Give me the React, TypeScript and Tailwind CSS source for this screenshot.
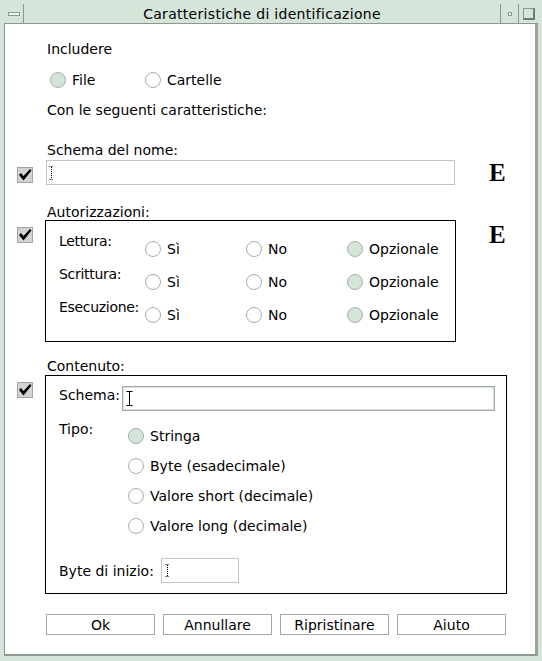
import React from 'react';

const Radio: React.FC<{ checked?: boolean; label: string }> = ({ checked, label }) => (
  <div className="flex items-center gap-[6px] h-4">
    <span
      className={`w-4 h-4 rounded-full border border-[#a9aea9] shrink-0 ${
        checked ? 'bg-[#d4e5d8]' : 'bg-white'
      }`}
    />
    <span className="leading-4 whitespace-nowrap">{label}</span>
  </div>
);

const Check: React.FC = () => (
  <span className="w-4 h-4 bg-[#d3d3d3] border border-[#a4a4a4] flex items-center justify-center shrink-0">
    <svg width="14" height="14" viewBox="0 0 14 14">
      <path d="M1 7 L3 5 L5.5 8 L12 1 L13.5 2.5 L5.5 12.5 Z" fill="#000" />
    </svg>
  </span>
);

const DotCursor: React.FC<{ h?: number }> = ({ h = 14 }) => (
  <svg width="5" height={h} viewBox={`0 0 5 ${h}`}>
    <line x1="2.5" y1="1" x2="2.5" y2={h - 1} stroke="#000" strokeDasharray="1 1" />
    <line x1="0.5" y1="0.5" x2="4.5" y2="0.5" stroke="#000" strokeDasharray="1 1" />
    <line x1="0.5" y1={h - 0.5} x2="4.5" y2={h - 0.5} stroke="#000" strokeDasharray="1 1" />
  </svg>
);

const Row3: React.FC<{ label: string }> = ({ label }) => (
  <div className="flex items-start h-[33px]">
    <span className="w-[86px] leading-4 whitespace-nowrap tracking-[-0.3px]">{label}</span>
    <div className="flex mt-[8px]">
      <div className="w-[101px]"><Radio label="Sì" /></div>
      <div className="w-[101px]"><Radio label="No" /></div>
      <div><Radio checked label="Opzionale" /></div>
    </div>
  </div>
);

export default function App() {
  return (
    <div className="w-[542px] h-[661px] bg-[#d6e5d9] pt-[4px] pl-[4px] pr-[4px] pb-[5px] flex flex-col font-['DejaVu_Sans',sans-serif] text-[14px] text-black">
      {/* title bar */}
      <div className="h-[20px] flex border-b border-[#8d988f] shrink-0">
        <div className="w-[20px] border-r border-[#8d988f] flex items-center justify-center">
          <span className="w-[12px] h-[4px] border border-[#8d988f] bg-[#eef5ef]" />
        </div>
        <div className="flex-1 flex items-center justify-center leading-4 pt-[1px] tracking-[0.3px]">
          Caratteristiche di identificazione
        </div>
        <div className="w-[18px] border-l border-[#8d988f] flex items-center justify-center">
          <span className="w-[4px] h-[4px] border border-[#8d988f] bg-[#eef5ef]" />
        </div>
        <div className="w-[20px] border-l border-[#8d988f] flex items-center justify-center">
          <span className="w-[12px] h-[12px] border border-[#8d988f] border-r-2 border-b-2 border-r-[#6e7a70] border-b-[#6e7a70]" />
        </div>
      </div>

      {/* body */}
      <div className="flex-1 bg-white border-l border-[#8d988f] border-r-[3px] border-r-[#9aa59c] border-b-2 border-b-[#8d988f] flex flex-col pt-[17px] pl-[12px]">
        <div className="pl-[28px] ml-[2px] h-4 leading-4">Includere</div>

        <div className="pl-[28px] mt-[15px] h-4 flex">
          <div className="ml-[5px] w-[95px]"><Radio checked label="File" /></div>
          <Radio label="Cartelle" />
        </div>

        <div className="pl-[28px] ml-[2px] mt-[14px] h-4 leading-4">Con le seguenti caratteristiche:</div>

        <div className="pl-[28px] ml-[2px] mt-[24px] h-4 leading-4">Schema del nome:</div>

        <div className="mt-[2px] flex items-start h-[25px]">
          <div className="mt-[7px]"><Check /></div>
          <div className="ml-[13px] w-[409px] h-[25px] border border-[#c2c6c2] flex items-center pl-[2px]">
            <DotCursor />
          </div>
          <span className="ml-[34px] font-['Liberation_Serif',serif] font-bold text-[25px] leading-[25px]">E</span>
        </div>

        <div className="pl-[28px] ml-[2px] mt-[19px] h-4 leading-4">Autorizzazioni:</div>

        <div className="flex items-start">
          <div className="mt-[7px]"><Check /></div>
          <div className="ml-[12px] w-[411px] h-[122px] border border-black pt-[12px] pl-[13px] flex flex-col">
            <Row3 label="Lettura:" />
            <Row3 label="Scrittura:" />
            <Row3 label="Esecuzione:" />
          </div>
          <span className="ml-[33px] mt-[2px] font-['Liberation_Serif',serif] font-bold text-[25px] leading-[25px]">E</span>
        </div>

        <div className="pl-[28px] ml-[2px] mt-[16px] h-4 leading-4">Contenuto:</div>

        <div className="mt-[1px] flex items-start">
          <div className="mt-[7px]"><Check /></div>
          <div className="ml-[12px] w-[462px] h-[219px] border border-black pt-[10px] pl-[13px] flex flex-col">
            <div className="flex items-start">
              <span className="w-[63px] leading-4 mt-[1px]">Schema:</span>
              <div className="w-[373px] h-[25px] border border-[#a3a8a4] shadow-[inset_0_0_0_1px_#d6e5d9] flex items-center pl-[3px]">
                <svg width="7" height="15" viewBox="0 0 7 15">
                  <path d="M0.5 0.5 H6.5 M3.5 0.5 V14.5 M0.5 14.5 H6.5" stroke="#000" fill="none" />
                </svg>
              </div>
            </div>
            <div className="flex items-start mt-[10px]">
              <span className="w-[69px] leading-4">Tipo:</span>
              <div className="flex flex-col gap-[14px] mt-[7px]">
                <Radio checked label="Stringa" />
                <Radio label="Byte (esadecimale)" />
                <Radio label="Valore short (decimale)" />
                <Radio label="Valore long (decimale)" />
              </div>
            </div>
            <div className="flex items-center mt-[24px]">
              <span className="w-[102px] leading-4 whitespace-nowrap">Byte di inizio:</span>
              <div className="w-[78px] h-[25px] border border-[#c2c6c2] flex items-center pl-[3px]">
                <DotCursor h={13} />
              </div>
            </div>
          </div>
        </div>

        <div className="mt-[20px] ml-[29px] flex gap-[8px]">
          {['Ok', 'Annullare', 'Ripristinare', 'Aiuto'].map((b) => (
            <button
              key={b}
              className="w-[109px] h-[21px] border border-[#a6a6a6] bg-white flex items-center justify-center leading-4"
            >
              {b}
            </button>
          ))}
        </div>
      </div>
    </div>
  );
}
